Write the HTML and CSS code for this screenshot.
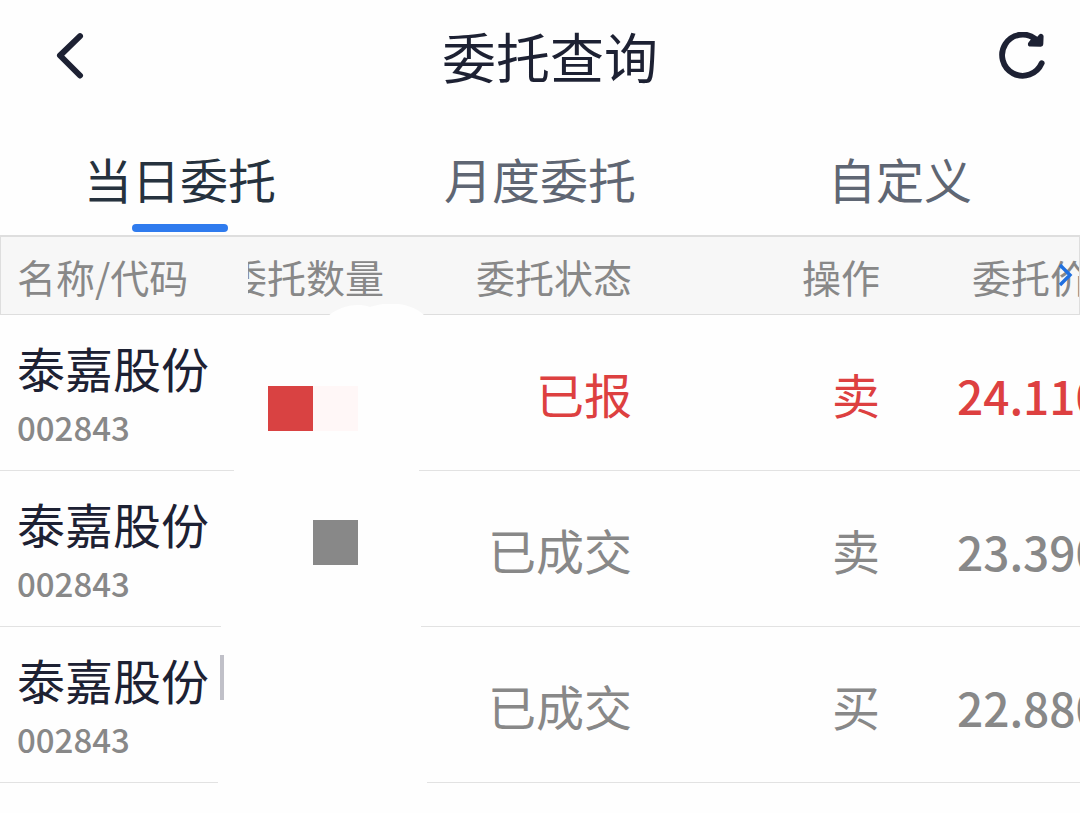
FILE: index.html
```html
<!DOCTYPE html>
<html lang="zh-CN">
<head>
    <meta charset="UTF-8">
    <meta name="viewport" content="width=device-width, initial-scale=1.0">
    <title>委托查询</title>
    <link rel="stylesheet" href="styles.css">
</head>
<body>
    <header class="header">
        <button class="back" type="button" aria-label="返回">
            <svg width="30" height="48" viewBox="0 0 30 48"><path d="M26 4.2 6 23.5l20 20" fill="none" stroke="#1d2133" stroke-width="6" stroke-linecap="round" stroke-linejoin="round"/></svg>
        </button>
        <h1>委托查询</h1>
        <button class="refresh" type="button" aria-label="刷新">
            <svg width="48" height="48" viewBox="0 0 48 48">
                <path d="M43.7 31.2A20.6 20.6 0 1 1 37.5 7" fill="none" stroke="#1d2133" stroke-width="5.8" stroke-linecap="round"/>
                <path d="M43 4.5 42.7 12.2 32.5 12 36 7.5 40 8Z" fill="#1d2133" stroke="#1d2133" stroke-width="5.2" stroke-linejoin="round"/>
            </svg>
        </button>
    </header>

    <nav class="tabs">
        <a class="tab active" href="#today">当日委托</a>
        <a class="tab" href="#month">月度委托</a>
        <a class="tab" href="#custom">自定义</a>
    </nav>

    <main class="orders">
        <table>
            <colgroup>
                <col class="col-name">
                <col class="col-amount">
                <col>
                <col>
                <col>
            </colgroup>
            <thead>
                <tr>
                    <th class="name">名称/代码</th>
                    <th><div class="clip"><span>委托数量</span></div></th>
                    <th>委托状态</th>
                    <th>操作</th>
                    <th>委托价格</th>
                </tr>
            </thead>
            <tbody>
                <tr class="pending">
                    <td class="name"><div class="stock">泰嘉股份</div><div class="code">002843</div></td>
                    <td></td>
                    <td>已报</td>
                    <td>卖</td>
                    <td class="price">24.1100</td>
                </tr>
                <tr>
                    <td class="name"><div class="stock">泰嘉股份</div><div class="code">002843</div></td>
                    <td></td>
                    <td>已成交</td>
                    <td>卖</td>
                    <td class="price">23.3900</td>
                </tr>
                <tr>
                    <td class="name"><div class="stock">泰嘉股份</div><div class="code">002843</div></td>
                    <td></td>
                    <td>已成交</td>
                    <td>买</td>
                    <td class="price">22.8800</td>
                </tr>
            </tbody>
        </table>

        <!-- 右侧还有更多列 -->
        <div class="more">
            <svg width="16" height="24" viewBox="0 0 16 24"><path d="M2 2l10 10L2 22" fill="none" stroke="#1f6fe0" stroke-width="3.4"/></svg>
        </div>

        <!-- 遮住委托数量 -->
        <svg class="mask" width="210" height="480" viewBox="0 0 210 480" aria-hidden="true">
            <path d="M110 12C120 3 138-2 152 3C172-4 196 0 207 12L201 60V167L203 323L209 479H0L3 323L16 167V12Z" fill="#fefefe"/>
            <rect x="50" y="82" width="45" height="45" fill="#d94242"/>
            <rect x="95" y="82" width="45" height="45" fill="#fff7f7"/>
            <rect x="95" y="216" width="45" height="45" fill="#888"/>
            <rect x="2" y="351" width="4" height="45" fill="#c0c0c8"/>
        </svg>
    </main>
</body>
</html>
```
FILE: styles.css
```css
* {
    box-sizing: border-box;
}
body {
    margin: 0;
    background: #fefefe;
    color: #1d2133;
    font-family: "Noto Sans CJK SC", sans-serif;
    overflow-x: hidden;
}
button {
    background: none;
    border: none;
    padding: 0;
    cursor: pointer;
}
.header {
    display: flex;
    align-items: center;
    justify-content: space-between;
    height: 112px;
}
.header svg {
    display: block;
}
.header h1 {
    margin: 0;
    font-size: 54px;
    font-weight: 400;
    line-height: 112px;
}
.back {
    padding: 0 18px 0 54px;
}
.refresh {
    padding: 0 34px 0 0;
}
.tabs {
    display: flex;
    height: 123px;
}
.tab {
    flex: 1;
    position: relative;
    display: flex;
    justify-content: center;
    color: #5f6673;
    font-size: 48px;
    line-height: 132px;
    text-decoration: none;
}
.tab.active {
    color: #26323e;
}
.tab.active::after {
    content: "";
    position: absolute;
    bottom: 3px;
    width: 96px;
    height: 8px;
    border-radius: 4px;
    background: #2f7bee;
}
.orders {
    position: relative;
    overflow: hidden;
}
table {
    width: 100%;
    min-width: 1128px;
    table-layout: fixed;
    border-collapse: separate;
    border-spacing: 0;
}
.col-name {
    width: 248px;
}
.col-amount {
    width: 136px;
}
th {
    height: 80px;
    padding: 0;
    border-top: 2px solid #dedede;
    border-bottom: 1px solid #dedede;
    background: #f7f7f7;
    color: #888;
    font-size: 39px;
    font-weight: 400;
    line-height: 60px;
    text-align: right;
    white-space: nowrap;
}
th.name {
    padding-left: 16px;
    border-left: 1px solid #dedede;
}
.clip {
    display: flex;
    justify-content: flex-end;
    overflow: hidden;
}
td {
    height: 156px;
    padding: 0;
    border-bottom: 1px solid #e2e2e2;
    color: #888;
    font-size: 48px;
    line-height: 64px;
    text-align: right;
}
.name {
    text-align: left;
}
td.name {
    padding: 4px 0 0 17px;
}
.stock {
    color: #1d2133;
}
.code {
    color: #888;
    font-size: 33px;
    font-weight: 500;
    line-height: 56px;
}
td.price {
    padding-top: 4px;
    font-size: 46px;
    font-weight: 500;
}
.pending td {
    color: #dd4040;
}
.more {
    position: absolute;
    top: 0;
    right: 0;
    display: flex;
    align-items: center;
    height: 80px;
    padding-right: 5px;
    border-right: 1px solid #dedede;
}
.mask {
    position: absolute;
    top: 69px;
    left: 218px;
}
```
